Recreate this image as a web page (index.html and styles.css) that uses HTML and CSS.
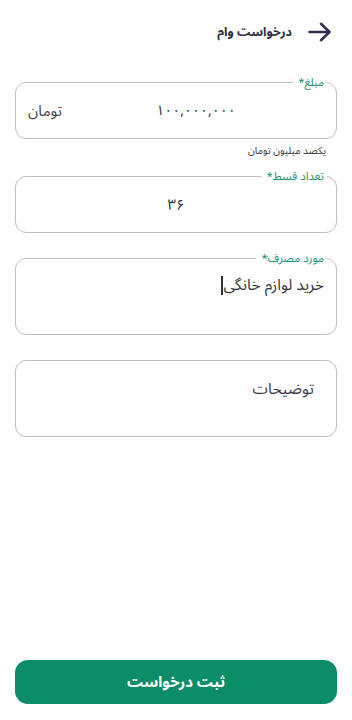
FILE: index.html
```html
<!DOCTYPE html>
<html lang="fa" dir="rtl">
<head>
<meta charset="utf-8">
<link rel="stylesheet" href="styles.css">
</head>
<body>
<div class="page">
  <header class="header">
    <svg class="back" width="24" height="20" viewBox="0 0 24 20" aria-hidden="true">
      <path d="M1.5 10H21.5M13 1.8L21.5 10L13 18.2" fill="none" stroke="#2f2f4f" stroke-width="2.6" stroke-linecap="round" stroke-linejoin="round"/>
    </svg>
    <h1 class="title">درخواست وام</h1>
  </header>

  <div class="field field-amount">
    <span class="label">مبلغ*</span>
    <div class="value value-center">۱۰۰,۰۰۰,۰۰۰</div>
    <div class="suffix">تومان</div>
  </div>
  <div class="helper">یکصد میلیون تومان</div>

  <div class="field field-count">
    <span class="label">تعداد قسط*</span>
    <div class="value value-center">۳۶</div>
  </div>

  <div class="field field-area">
    <span class="label">مورد مصرف*</span>
    <div class="area-text">خرید لوازم خانگی<span class="caret"></span></div>
  </div>

  <div class="field field-area field-desc">
    <div class="area-text placeholder">توضیحات</div>
  </div>

  <button class="submit">ثبت درخواست</button>
</div>
</body>
</html>
```
FILE: styles.css
```css
html, body {
  margin: 0;
  padding: 0;
  background: #ffffff;
}
body {
  font-family: "Noto Sans Arabic", "DejaVu Sans", "Noto Sans", sans-serif;
  color: #333340;
}
.page {
  min-height: 720px;
  box-sizing: border-box;
  padding: 0 15px 16px;
  display: flex;
  flex-direction: column;
}
.header {
  height: 64px;
  display: flex;
  align-items: center;
  gap: 16px;
  padding-right: 5px;
}
.back {
  display: block;
}
.title {
  margin: 0;
  font-size: 12.5px;
  font-weight: 700;
  color: #2f2f45;
}
.field {
  position: relative;
  border: 1px solid #bdbdc2;
  border-radius: 11px;
  height: 57px;
  box-sizing: border-box;
  display: flex;
  align-items: center;
  padding: 0 12px;
}
.field-amount {
  margin-top: 18px;
}
.label {
  position: absolute;
  top: -9px;
  right: 9px;
  background: #ffffff;
  padding: 0 3px 0 5px;
  font-size: 11.5px;
  line-height: 16px;
  color: #17926c;
}
.value {
  flex: 1;
  font-size: 14px;
  letter-spacing: 0.5px;
  color: #2f2f3f;
}
.value-center {
  text-align: center;
}
.suffix {
  font-size: 15px;
  color: #444450;
  width: 40px;
  text-align: left;
}
.helper {
  margin-top: 5px;
  font-size: 10px;
  line-height: 14px;
  color: #333;
  padding-right: 11px;
}
.field-count {
  margin-top: 18px;
}
.field-count .value {
  font-size: 15px;
}
.field-area {
  margin-top: 25px;
  height: 77px;
  align-items: flex-start;
}
.area-text {
  margin-top: 15px;
  font-size: 15.5px;
  line-height: 22px;
  color: #333338;
  display: flex;
  align-items: center;
}
.caret {
  display: inline-block;
  width: 1.5px;
  height: 19px;
  background: #333;
  margin-right: 1px;
}
.field-desc {
  margin-top: 25px;
  padding-right: 22px;
}
.field-desc .area-text {
  margin-top: 17px;
  color: #3a3a44;
}
.submit {
  margin-top: auto;
  height: 44px;
  width: 100%;
  border: none;
  border-radius: 13px;
  background: #0b8d69;
  color: #ffffff;
  font-family: inherit;
  font-size: 15px;
  font-weight: 700;
}
```
